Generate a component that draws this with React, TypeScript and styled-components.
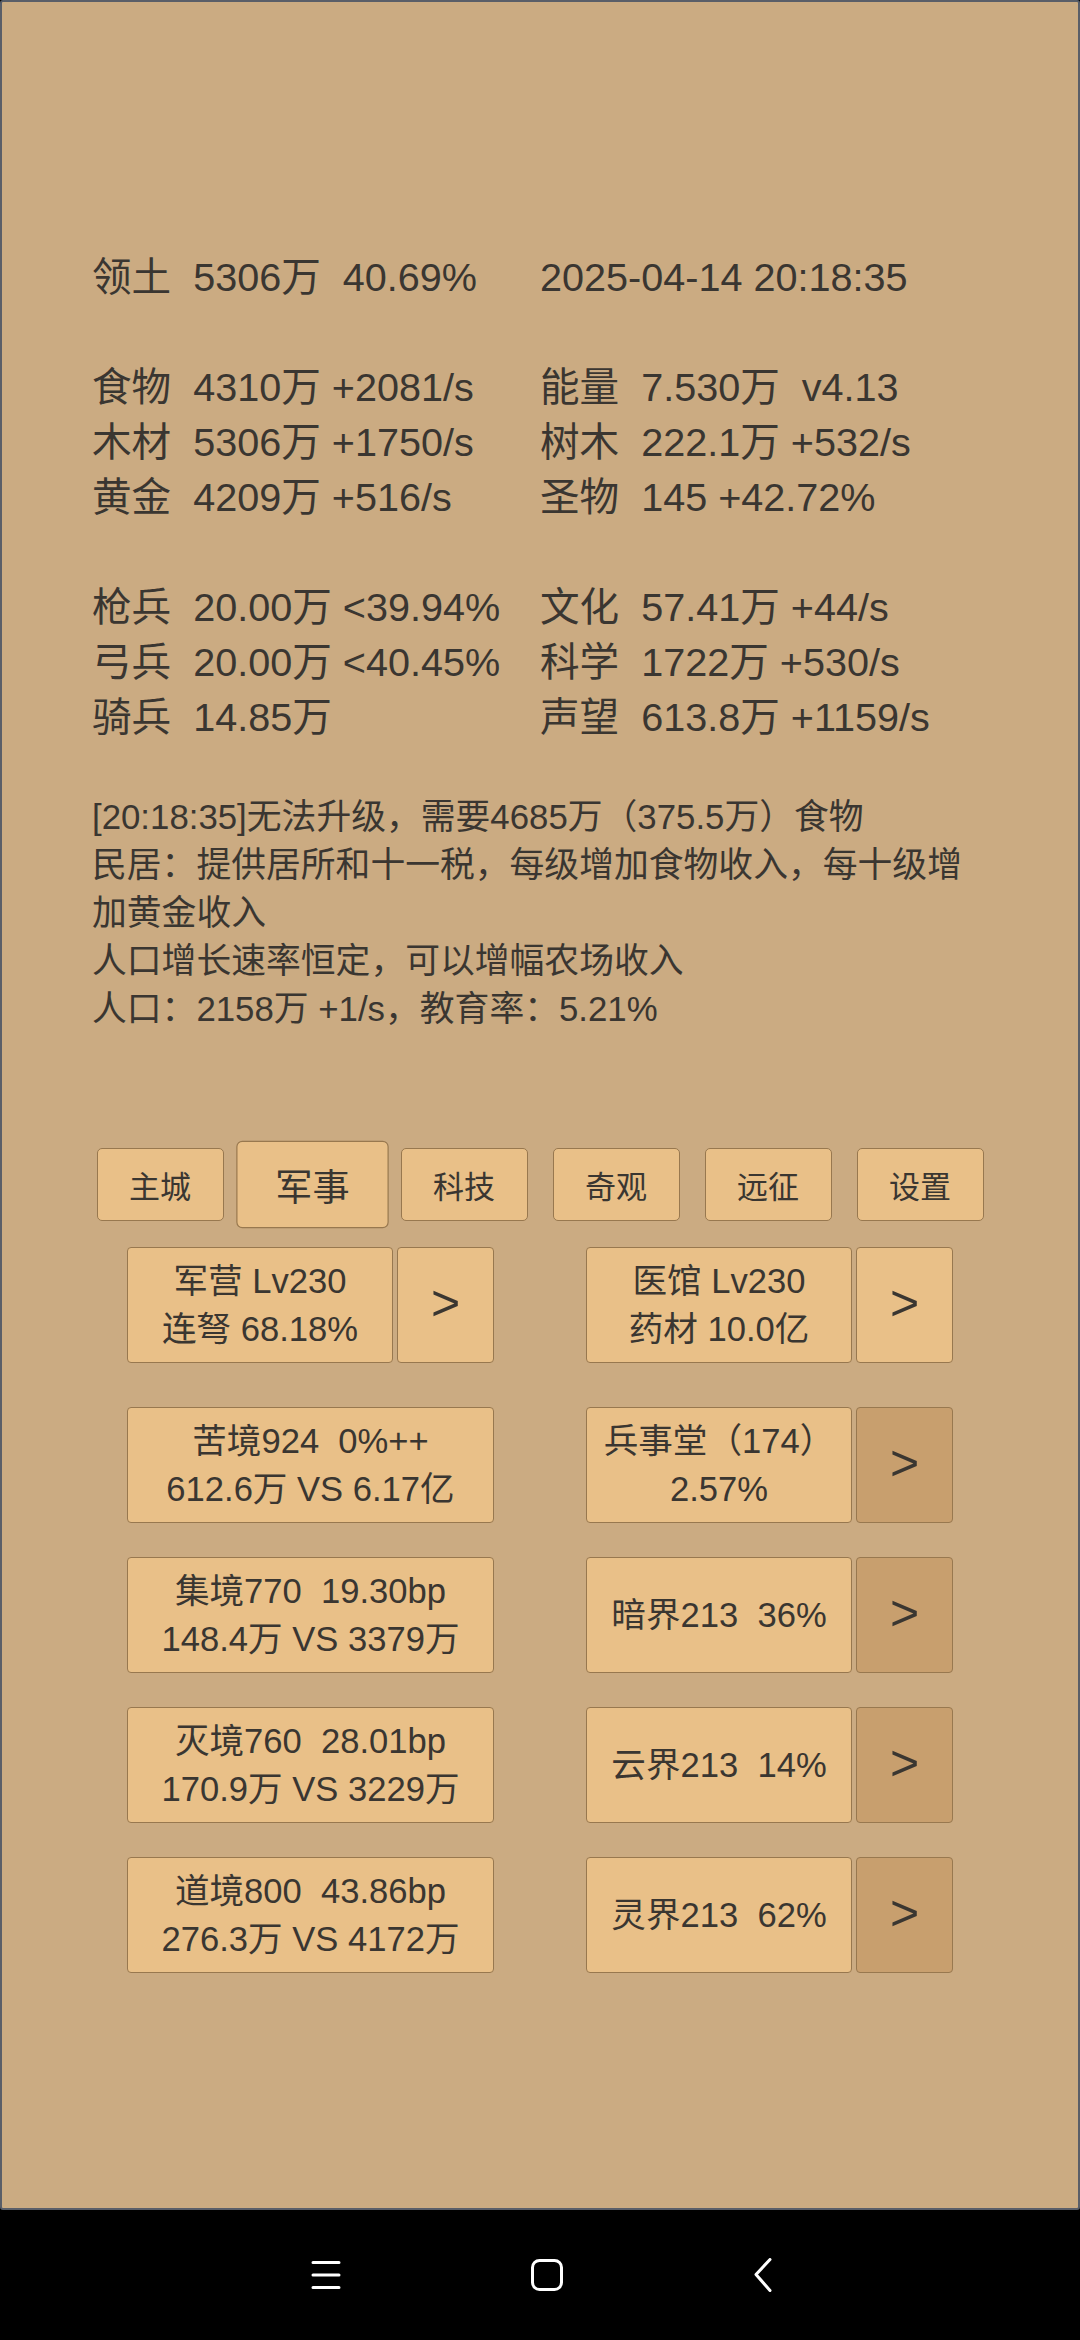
import React from 'react';
import styled, { createGlobalStyle, css } from 'styled-components';

const GlobalStyle = createGlobalStyle`
  html, body {
    margin: 0;
    padding: 0;
    background: #000;
  }
  body {
    font-family: "Liberation Sans", "Noto Sans CJK SC", sans-serif;
    color: #3a3631;
  }
`;

const statGroups: [string, string][][] = [
  [['领土  5306万  40.69%', '2025-04-14 20:18:35']],
  [
    ['食物  4310万 +2081/s', '能量  7.530万  v4.13'],
    ['木材  5306万 +1750/s', '树木  222.1万 +532/s'],
    ['黄金  4209万 +516/s', '圣物  145 +42.72%'],
  ],
  [
    ['枪兵  20.00万 <39.94%', '文化  57.41万 +44/s'],
    ['弓兵  20.00万 <40.45%', '科学  1722万 +530/s'],
    ['骑兵  14.85万', '声望  613.8万 +1159/s'],
  ],
];

const notes = [
  '[20:18:35]无法升级，需要4685万（375.5万）食物',
  '民居：提供居所和十一税，每级增加食物收入，每十级增加黄金收入',
  '人口增长速率恒定，可以增幅农场收入',
  '人口：2158万 +1/s，教育率：5.21%',
];

const tabs = ['主城', '军事', '科技', '奇观', '远征', '设置'];

type Cell = { lines: string[]; arrow?: 'light' | 'dark' };

const rows: [Cell, Cell][] = [
  [
    { lines: ['军营 Lv230', '连弩 68.18%'], arrow: 'light' },
    { lines: ['医馆 Lv230', '药材 10.0亿'], arrow: 'light' },
  ],
  [
    { lines: ['苦境924  0%++', '612.6万 VS 6.17亿'] },
    { lines: ['兵事堂（174）', '2.57%'], arrow: 'dark' },
  ],
  [
    { lines: ['集境770  19.30bp', '148.4万 VS 3379万'] },
    { lines: ['暗界213  36%'], arrow: 'dark' },
  ],
  [
    { lines: ['灭境760  28.01bp', '170.9万 VS 3229万'] },
    { lines: ['云界213  14%'], arrow: 'dark' },
  ],
  [
    { lines: ['道境800  43.86bp', '276.3万 VS 4172万'] },
    { lines: ['灵界213  62%'], arrow: 'dark' },
  ],
];

const BoardCell = ({ cell }: { cell: Cell }) => (
  <Pair>
    <Btn>
      {cell.lines.map((l) => (
        <span key={l}>{l}</span>
      ))}
    </Btn>
    {cell.arrow && (
      <Arrow $dark={cell.arrow === 'dark'}>&gt;</Arrow>
    )}
  </Pair>
);

export default function App() {
  return (
    <Screen>
      <GlobalStyle />
      <Page>
        {statGroups.map((group, gi) => (
          <StatGroup key={gi}>
            {group.flat().map((s, i) => (
              <Stat key={i}>{s}</Stat>
            ))}
          </StatGroup>
        ))}

        <Notes>
          {notes.map((n) => (
            <p key={n}>{n}</p>
          ))}
        </Notes>

        <Tabs>
          {tabs.map((t) => (
            <Tab key={t} $active={t === '军事'}>
              {t}
            </Tab>
          ))}
        </Tabs>

        <Board>
          {rows.map(([l, r], i) => (
            <Row key={i} $first={i === 0}>
              <BoardCell cell={l} />
              <BoardCell cell={r} />
            </Row>
          ))}
        </Board>
      </Page>

      <NavBar>
        <NavIcon width="30" height="30" viewBox="0 0 30 30">
          <path d="M2 2.5h26M2 15h26M2 27.5h26" />
        </NavIcon>
        <NavIcon width="32" height="32" viewBox="0 0 32 32">
          <rect x="1.5" y="1.5" width="29" height="29" rx="7" />
        </NavIcon>
        <NavIcon width="20" height="34" viewBox="0 0 20 34">
          <path d="M17 1.5L3 16.5L17 32.5" />
        </NavIcon>
      </NavBar>
    </Screen>
  );
}

const Screen = styled.div`
  width: 1080px;
  height: 2340px;
  display: flex;
  flex-direction: column;
`;

const Page = styled.main`
  flex: 0 0 2210px;
  box-sizing: border-box;
  border: 2px solid #5a5e68;
  border-radius: 3px;
  background: #cbab82;
  padding: 248px 90px 0;
`;

const StatGroup = styled.div`
  display: grid;
  grid-template-columns: 1fr 1fr;

  & + & {
    margin-top: 55px;
  }
`;

const Stat = styled.div`
  font-size: 39.6px;
  line-height: 55px;
  white-space: pre;
`;

const Notes = styled.div`
  margin-top: 48px;
  max-width: 880px;
  font-size: 34.8px;
  line-height: 48px;

  p {
    margin: 0;
  }
`;

const Tabs = styled.nav`
  margin-top: 115px;
  display: flex;
  justify-content: center;
  gap: 25px;
`;

const Tab = styled.div<{ $active?: boolean }>`
  box-sizing: border-box;
  width: 127px;
  height: 73px;
  display: flex;
  align-items: center;
  justify-content: center;
  border: 1.5px solid #98784f;
  border-radius: 5px;
  background: #e9c088;
  font-size: 31px;
  ${(p) =>
    p.$active &&
    css`
      transform: scale(1.2);
    `}
`;

const Board = styled.section`
  margin-top: 26px;
  display: flex;
  flex-direction: column;
  gap: 34px;
`;

const Row = styled.div<{ $first?: boolean }>`
  display: grid;
  grid-template-columns: 367px 367px;
  column-gap: 92px;
  justify-content: center;
  margin-bottom: ${(p) => (p.$first ? '10px' : '0')};
`;

const Pair = styled.div`
  display: flex;
  gap: 4px;
`;

const buttonBase = css`
  box-sizing: border-box;
  height: 116px;
  border: 1.5px solid #98784f;
  border-radius: 4px;
  display: flex;
  flex-direction: column;
  align-items: center;
  justify-content: center;
  text-align: center;
`;

const Btn = styled.div`
  ${buttonBase}
  flex: 1;
  background: #e9c088;
  font-size: 34.6px;
  line-height: 48px;
  white-space: pre;
`;

const Arrow = styled.div<{ $dark?: boolean }>`
  ${buttonBase}
  flex: 0 0 97px;
  background: ${(p) => (p.$dark ? '#c89f6e' : '#e9c088')};
  font-size: 50px;
  padding-bottom: 4px;
`;

const NavBar = styled.footer`
  flex: 1;
  background: #000;
  display: flex;
  align-items: center;
  justify-content: center;
  gap: 190px;
  padding-left: 4px;
`;

const NavIcon = styled.svg`
  fill: none;
  stroke: #fff;
  stroke-width: 3;
  stroke-linecap: round;
  stroke-linejoin: round;
`;
